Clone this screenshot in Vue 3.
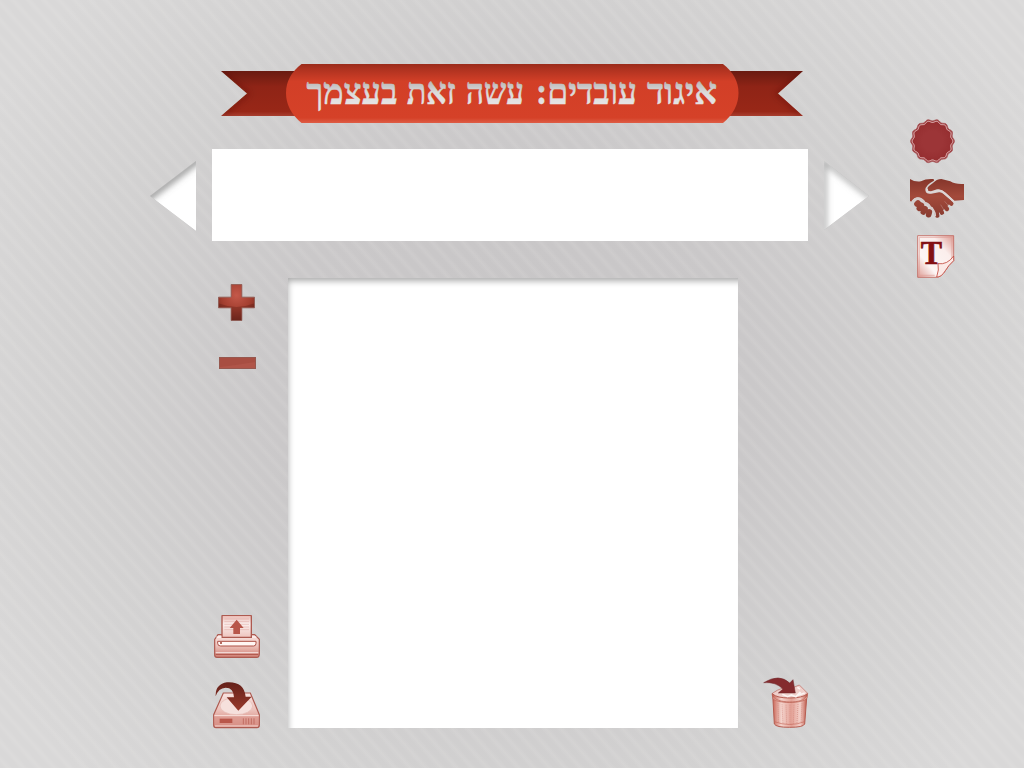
<script setup>
const wavy = (cx, cy, radius, depth, lobes) => {
  const points = []
  for (let i = 0; i < 240; i++) {
    const a = (i / 240) * Math.PI * 2
    const r = radius + depth * Math.cos(a * lobes)
    points.push(`${(cx + r * Math.cos(a)).toFixed(2)} ${(cy + r * Math.sin(a)).toFixed(2)}`)
  }
  return `M${points.join('L')}Z`
}
const sealOuter = wavy(22.5, 22.2, 21.1, 0.8, 14)
const sealLine = wavy(22.5, 22.2, 19.5, 0.8, 14)
const words = [
  { text: 'איגוד', right: 497, width: 70 },
  { text: 'עובדים:', right: 417, width: 101 },
  { text: 'עשה', right: 304, width: 58 },
  { text: 'זאת', right: 235.5, width: 48.5 },
  { text: 'בעצמך', right: 177.5, width: 91 },
]
</script>

<template>
  <main class="page">
    <svg class="defs" width="0" height="0" aria-hidden="true">
      <defs>
        <linearGradient id="center" x1="0" y1="0" x2="0" y2="1">
          <stop offset="0" stop-color="#962a1a" /><stop offset=".1" stop-color="#ae3220" />
          <stop offset=".3" stop-color="#d23f27" /><stop offset=".9" stop-color="#d54128" />
          <stop offset="1" stop-color="#e0624b" />
        </linearGradient>
        <linearGradient id="tail" x1="0" y1="0" x2="0" y2="1">
          <stop offset="0" stop-color="#691b11" /><stop offset=".35" stop-color="#8f2416" />
          <stop offset=".9" stop-color="#982717" /><stop offset="1" stop-color="#a83e2f" />
        </linearGradient>
        <linearGradient id="silver" gradientUnits="userSpaceOnUse" x1="0" y1="17" x2="0" y2="42">
          <stop offset="0" stop-color="#b5b2b2" /><stop offset=".22" stop-color="#c6c4c4" />
          <stop offset=".5" stop-color="#dbdada" /><stop offset=".9" stop-color="#e4e3e3" />
        </linearGradient>
        <linearGradient id="brick" gradientUnits="userSpaceOnUse" x1="0" y1="205" x2="0" y2="326">
          <stop offset="0" stop-color="#84352a" /><stop offset=".45" stop-color="#a34a3b" />
          <stop offset="1" stop-color="#863a2f" />
        </linearGradient>
        <linearGradient id="blush" x1="0" y1="0" x2="0" y2="1">
          <stop offset="0" stop-color="#f8e4e1" /><stop offset=".5" stop-color="#ecc0b9" />
          <stop offset="1" stop-color="#cf7e73" />
        </linearGradient>
        <linearGradient id="paper" x1="0" y1="0" x2="0" y2="1">
          <stop offset="0" stop-color="#eab9b2" /><stop offset=".4" stop-color="#fbeeec" /><stop offset="1" stop-color="#eec4be" />
        </linearGradient>
        <linearGradient id="sheet" x1="1" y1="0" x2="0" y2="1">
          <stop offset="0" stop-color="#dc9890" /><stop offset=".3" stop-color="#fbeeec" />
          <stop offset=".7" stop-color="#fdf6f5" /><stop offset="1" stop-color="#dd9b93" />
        </linearGradient>
        <linearGradient id="drum" x1="0" y1="0" x2="1" y2="0">
          <stop offset="0" stop-color="#c96556" /><stop offset=".25" stop-color="#f4d4cd" />
          <stop offset=".55" stop-color="#e3a196" /><stop offset=".8" stop-color="#f3cfc8" />
          <stop offset="1" stop-color="#bd5748" />
        </linearGradient>
        <linearGradient id="arrow" x1="0" y1="0" x2="0" y2="1">
          <stop offset="0" stop-color="#642019" /><stop offset="1" stop-color="#983a2c" />
        </linearGradient>
        <radialGradient id="sealFill"><stop offset=".5" stop-color="#9c3537" /><stop offset="1" stop-color="#952e30" /></radialGradient>
        <radialGradient id="plusFill" cx=".5" cy=".3" r=".75">
          <stop offset="0" stop-color="#c4594a" /><stop offset=".55" stop-color="#a33f30" /><stop offset="1" stop-color="#6c251c" />
        </radialGradient>
        <filter id="soft" x="-30%" y="-30%" width="160%" height="160%"><feGaussianBlur stdDeviation="3" /></filter>
        <clipPath id="centerClip"><path d="M81.500 1H503Q518.500 13 518.500 30T503 60H81.500Q66 47 66 30T81.500 1Z" /></clipPath>
        <clipPath id="tailClip"><path d="M1 8H90V53H1L27 30.500ZM583 8H500V53H583L558 30.500Z" /></clipPath>
        <clipPath id="prevClip"><path d="M0 35L46 0V70Z" /></clipPath>
        <clipPath id="nextClip"><path d="M0 0L45 35L0 69Z" /></clipPath>
      </defs>
    </svg>

    <section class="workspace">
      <header class="banner">
        <svg width="584" height="61" viewBox="0 0 584 61">
          <g clip-path="url(#tailClip)">
            <rect y="8" width="584" height="45" fill="url(#tail)" />
            <path d="M1 8L27 30.5L1 53M583 8L558 30.5L583 53" fill="none" stroke="#4c110a" stroke-opacity=".35" stroke-width="5" filter="url(#soft)" />
          </g>
          <g clip-path="url(#centerClip)">
            <rect x="66" width="453" height="61" fill="url(#center)" />
          </g>
          <text v-for="word in words" :key="word.text" class="title" :x="word.right" y="40.5" direction="rtl" :textLength="word.width" lengthAdjust="spacingAndGlyphs">{{ word.text }}</text>
        </svg>
      </header>

      <div class="carousel">
        <svg class="prev" width="46" height="70" viewBox="0 0 46 70">
          <g clip-path="url(#prevClip)">
            <path d="M0 35L46 0V70Z" fill="#fff" />
            <path d="M-5 39L51-4" stroke="#777" stroke-opacity=".7" stroke-width="8" filter="url(#soft)" />
          </g>
        </svg>
        <div class="strip"></div>
        <svg class="next" width="45" height="70" viewBox="0 0 45 70">
          <g clip-path="url(#nextClip)">
            <path d="M0 0L45 35L0 69Z" fill="#fff" />
            <path d="M0 74V0L48 37" fill="none" stroke="#888" stroke-opacity=".7" stroke-width="5" filter="url(#soft)" />
          </g>
        </svg>
      </div>

      <div class="editor">
        <nav class="tools">
          <svg class="plus" width="37" height="37" viewBox="0 0 38 38">
            <path d="M13.500 .5H24.500V13.500H37.500V24.500H24.500V37.500H13.500V24.500H.5V13.500H13.500Z" fill="url(#plusFill)" stroke="#8a564f" stroke-opacity=".8" />
            <path d="M1 20Q19 27 37 20V24H24V37H14V24H1Z" fill="#591d15" opacity=".35" />
          </svg>
          <svg class="minus" width="37" height="12" viewBox="0 0 37 12">
            <rect x=".5" y=".5" width="36" height="11" fill="#b05549" stroke="#96584f" /><path d="M1 1H36V5Q18 8 1 10Z" fill="#963e33" opacity=".3" />
          </svg>
          <svg class="print" width="48" height="44" viewBox="0 0 144 132">
            <path d="M15 59H125L139 73V116Q139 127 131 127H12Q5 127 5 119V73Z" fill="url(#blush)" stroke="#ad5a50" stroke-width="3.5" />
            <path d="M27 67V4Q27 1 30 1H112Q115 1 115 4V67Z" fill="url(#paper)" stroke="#ad5a50" stroke-width="4" />
            <path d="M34 12H108M34 20H108M34 28H108M34 36H108M34 44H108" stroke="#d99991" stroke-width="2.5" opacity=".5" />
            <path d="M71 14L92 39H81V57H61V39H50Z" fill="#b7564a" />
            <path d="M14 79H129V85Q129 93 122 93H23Q14 93 14 85Z" fill="#fff6f4" stroke="#ad5146" stroke-width="3" />
            <path d="M8 118H136" stroke="#ad5146" stroke-width="3" /><path d="M10 66H26M117 66H130M8 113H136" stroke="#fff" stroke-width="4" opacity=".6" />
            <circle cx="24" cy="84" r="3" fill="#9b3c31" />
          </svg>
          <svg class="save" width="48" height="48" viewBox="0 0 144 144">
            <path d="M31 33H112L139 98V130Q139 137 132 137H9Q2 137 2 130V98Z" fill="url(#blush)" stroke="#ad5a50" stroke-width="3.5" />
            <ellipse cx="70" cy="72" rx="49" ry="26" fill="#f6e0dc" stroke="#e5b8b1" stroke-width="2" />
            <path d="M4 101H137V132H4Z" fill="#dc978d" opacity=".6" /><path d="M4 101H137M6 132H135" stroke="#fff0ec" stroke-width="3" opacity=".8" />
            <rect x="20" y="110" width="38" height="13" fill="#b9564a" /><path d="M91 109V127M99 109V127M107 109V127M115 109V127M123 109V127" stroke="#c16d62" stroke-width="3" />
            <path d="M8 43Q6 7 42 1Q93-2 98 44H116L76 86L41 46H63Q62 17 38 17Q16 18 8 43Z" fill="url(#arrow)" />
          </svg>
        </nav>
        <div class="canvas"></div>
        <svg class="trash" width="47" height="52" viewBox="0 0 141 156">
          <path d="M28 52Q58 30 92 34L109 27L124 42L134 52L120 67H43Z" fill="#efcfca" stroke="#ba675d" stroke-width="2" />
          <path d="M29 54L34 144Q39 154 80 154T125 144L132 54Q118 66 80 66T29 54Z" fill="url(#drum)" stroke="#b65d51" stroke-width="3" />
          <path d="M28 52C20 85 139 88 133 52L132 66C122 84 38 84 29 66Z" fill="#edb7ad" stroke="#b85d50" stroke-width="2" />
          <path d="M45 82L47 139M57 85L60 143M69 86L71 144M81 86V144M93 86L91 144M105 84L102 141M117 82L114 138" stroke="#bb594c" stroke-width="3" stroke-dasharray="3 3" opacity=".35" />
          <path d="M34 137Q80 154 125 137" fill="none" stroke="#c4685b" stroke-width="2" />
          <path d="M58 55L74 62L85 57L99 62L112 48L107 57L125 51M103 34L111 39" fill="none" stroke="#fff" stroke-width="5" opacity=".75" />
          <path d="M2 20Q49-9 80 21L90 11L97 51L46 51L60 39Q38 17 2 20Z" fill="#842b2e" stroke="#6c2529" stroke-width="1.5" />
        </svg>
      </div>
    </section>

    <aside class="side">
      <svg class="seal" width="45" height="45" viewBox="0 0 45 45">
        <path :d="sealOuter" fill="#a04144" stroke="#a35153" stroke-width=".8" />
        <path :d="sealLine" fill="url(#sealFill)" stroke="#e6bcbc" stroke-width="1" />
      </svg>
      <svg class="hands" width="56" height="42" viewBox="27 204 168 126">
        <path d="M30 207Q45 217 63 214Q78 205 101 207L102 212Q76 225 76 240Q78 254 94 251L117 247Q124 246 130 252L155 274L145 285L134 297L121 306L108 312Q104 292 91 289Q88 278 76 276Q68 262 53 262Q43 262 36 274H30Z" fill="url(#brick)" />
        <path d="M125 257L154 281M118 269L141 297M112 280L126 308M106 292L112 317" fill="none" stroke="url(#brick)" stroke-width="13" stroke-linecap="round" />
        <path d="M134 274L147 289M122 284L133 302" fill="none" stroke="#cba49f" stroke-width="1.2" />
        <path d="M192 222V270L163 272L137 248Q124 235 111 238L93 244Q81 245 82 235Q84 229 98 220Q110 207 124 207L151 214Q166 224 192 222Z" fill="url(#brick)" />
        <path d="M82 236Q79 249 95 247L113 242Q124 240 134 249L162 275" fill="none" stroke="#e0d6d5" stroke-width="4.5" />
        <path d="M37 274Q43 265 54 265Q68 267 75 279Q90 283 91 293Q106 299 106 319" fill="none" stroke="#d6cccb" stroke-width="5" />
        <path d="M54 279L51 282M64 286L58 295M75 296L70 306M88 306L86 314" fill="none" stroke="url(#brick)" stroke-width="17" stroke-linecap="round" />
      </svg>
      <svg class="type" width="38" height="43" viewBox="51 373 114 129">
        <path d="M53 375H161V450Q145 464 136 480Q124 500 108 500H53Z" fill="url(#sheet)" stroke="#c2685f" stroke-width="2.5" />
        <path d="M57 380H156V445M58 380V494H104" fill="none" stroke="#df9d96" stroke-width="4" opacity=".55" />
        <path d="M110 499Q118 477 114 459Q142 463 161 436V450Q145 464 136 480Q124 500 110 499Z" fill="#fbe9e6" stroke="#c2483d" stroke-width="2.5" />
        <text class="letter" x="94" y="461" text-anchor="middle" textLength="64" lengthAdjust="spacingAndGlyphs">T</text>
      </svg>
    </aside>
  </main>
</template>

<style>
body { margin: 0; overflow: hidden; }
</style>
<style scoped>
.page {
  display: flex; box-sizing: border-box; width: 1024px; height: 768px; padding-left: 150px; overflow: hidden;
  background:
    repeating-linear-gradient(48deg, rgba(255,255,255,0) 0 2px, rgba(255,252,248,.09) 6px, rgba(255,255,255,0) 10px 11.5px),
    radial-gradient(ellipse 600px 560px at 512px 384px, #c7c5c6 0%, #cac8c9 40%, #d2d1d1 72%, #d9d8d8 100%);
}
svg { display: block; flex: none; }
.defs { position: absolute; }
.workspace { display: flex; flex-direction: column; width: 720px; }
.banner { padding: 63px 0 0 70px; height: 61px; }
.title { font: bold 37px "Liberation Serif", serif; fill: url(#silver); stroke: url(#silver); stroke-width: .5px; }
.carousel { display: flex; align-items: flex-start; height: 92px; margin-top: 25px; }
.prev { margin-top: 12px; }
.strip { width: 596px; height: 92px; margin: 0 16px; background: #fff; }
.next { margin-top: 12px; }
.editor { display: flex; margin-top: 37px; height: 450px; }
.tools { display: flex; flex-direction: column; width: 75px; margin-left: 63px; }
.plus { margin: 6px 0 0 5px; }
.minus { margin: 36px 0 0 6px; }
.print { margin-top: 246px; }
.save { margin-top: 23px; }
.canvas { width: 450px; height: 450px; background: #fff; box-shadow: inset 3px 6px 6px -3px #aaa; }
.trash { align-self: flex-end; margin-left: 25px; }
.side { display: flex; flex-direction: column; margin-left: 40px; padding-top: 119px; }
.hands { margin: 14px 0 0 -1px; }
.type { margin: 15px 0 0 7px; }
.letter { font: bold 98px "Liberation Serif", serif; fill: #831014; stroke: #831014; stroke-width: 2px; }
</style>
